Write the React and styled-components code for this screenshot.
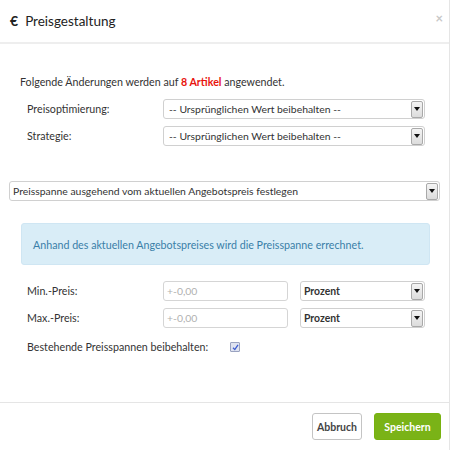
import React from 'react'
import styled, { createGlobalStyle } from 'styled-components'

const GlobalStyle = createGlobalStyle`
  html, body {
    margin: 0;
    padding: 0;
    background: #fff;
  }
  body {
    font-family: Lato, 'Open Sans', sans-serif;
    color: #333;
  }
`

const Modal = styled.div`
  width: 449px;
  height: 450px;
  border-right: 1px solid #e5e5e5;
  background: #fff;
  display: flex;
  flex-direction: column;
`

const Header = styled.div`
  height: 44px;
  box-sizing: border-box;
  border-bottom: 2px solid #eee;
  display: flex;
  align-items: center;
  padding: 0 6px 2px 10px;
`

const Title = styled.h4`
  flex: 1;
  margin: 0;
  font-size: 13.5px;
  font-weight: 400;
  color: #222;
  > b {
    font-size: 14px;
    font-weight: 700;
    margin-right: 7px;
  }
`

const Close = styled.span`
  color: #c8c8c8;
  font-size: 13px;
  font-weight: 700;
  margin-top: -4px;
`

const Body = styled.div`
  flex: 1;
  padding: 30px 9px 0 9px;
  font-size: 10.7px;
`

const Intro = styled.p`
  margin: 0 0 0 11px;
  line-height: 16px;
  > strong {
    color: #e8140e;
  }
`

const Row = styled.div`
  display: grid;
  grid-template-columns: 136px 262px;
  align-items: center;
  padding-left: 18px;
  margin-top: ${p => p.$gap || 7}px;
`

const PriceRow = styled.div`
  display: grid;
  grid-template-columns: 136px 125px 137px;
  align-items: center;
  padding-left: 18px;
  margin-top: ${p => p.$gap || 7}px;
  > :last-child {
    margin-left: 12px;
  }
`

const CheckRow = styled.div`
  display: flex;
  align-items: center;
  gap: 22px;
  padding-left: 18px;
  margin-top: 11px;
  height: 16px;
`

const Label = styled.span`
  line-height: 16px;
`

const SelectBox = styled.div`
  height: 20px;
  box-sizing: border-box;
  border: 1px solid #d0d0d0;
  border-radius: 3px;
  display: flex;
  align-items: center;
  padding-left: ${p => (p.$tight ? 3 : 5)}px;
  font-size: 10.4px;
  font-weight: ${p => (p.$bold ? 700 : 400)};
  color: #333;
  background: #fff;
  margin-top: ${p => p.$gap || 0}px;
  > span {
    flex: 1;
  }
`

const Arrow = styled.i`
  width: 12px;
  height: 17px;
  margin-right: 1px;
  box-sizing: border-box;
  border: 1px solid #a9a9a9;
  border-radius: 2px;
  background: linear-gradient(#f4f4f4, #dcdcdc);
  display: flex;
  align-items: center;
  justify-content: center;
  &::after {
    content: '';
    border-left: 3px solid transparent;
    border-right: 3px solid transparent;
    border-top: 4px solid #111;
  }
`

const Info = styled.div`
  margin: 22px 10px 0 12px;
  height: 42px;
  box-sizing: border-box;
  background: #d9edf7;
  border: 1px solid #cfe6f3;
  border-radius: 3px;
  color: #3a7fa8;
  display: flex;
  align-items: center;
  padding-left: 11px;
`

const Input = styled.input`
  height: 20px;
  box-sizing: border-box;
  border: 1px solid #d5d5d5;
  border-radius: 3px;
  padding: 0 3px;
  font-family: inherit;
  font-size: 10.4px;
  outline: none;
  &::placeholder {
    color: #b0b0b0;
  }
`

const Check = styled.span`
  width: 10px;
  height: 10px;
  box-sizing: border-box;
  border: 1px solid #9aa3c0;
  background: #dfe3f0;
  border-radius: 1px;
  display: flex;
  align-items: center;
  justify-content: center;
`

const Footer = styled.div`
  border-top: 1px solid #e5e5e5;
  height: 47px;
  display: flex;
  justify-content: flex-end;
  align-items: center;
  gap: 12px;
  padding-right: 8px;
`

const Button = styled.button`
  height: 27px;
  box-sizing: border-box;
  border-radius: 3px;
  font-family: inherit;
  font-size: 10.5px;
  font-weight: 700;
  padding: 0;
  border: 1px solid ${p => (p.$primary ? '#78b20f' : '#c4c4c4')};
  background: ${p => (p.$primary ? '#7ab317' : '#fff')};
  color: ${p => (p.$primary ? '#fff' : '#444')};
  width: ${p => (p.$primary ? 67 : 50)}px;
`

const Select = ({ children, ...rest }) => (
  <SelectBox {...rest}>
    <span>{children}</span>
    <Arrow />
  </SelectBox>
)

const App = () => (
  <>
    <GlobalStyle />
    <Modal>
      <Header>
        <Title>
          <b>€</b>Preisgestaltung
        </Title>
        <Close>×</Close>
      </Header>
      <Body>
        <Intro>
          Folgende Änderungen werden auf <strong>8 Artikel</strong> angewendet.
        </Intro>
        <Row $gap={9}>
          <Label>Preisoptimierung:</Label>
          <Select>-- Ursprünglichen Wert beibehalten --</Select>
        </Row>
        <Row>
          <Label>Strategie:</Label>
          <Select>-- Ursprünglichen Wert beibehalten --</Select>
        </Row>
        <Select $tight $gap={35}>
          Preisspanne ausgehend vom aktuellen Angebotspreis festlegen
        </Select>
        <Info>Anhand des aktuellen Angebotspreises wird die Preisspanne errechnet.</Info>
        <PriceRow $gap={16}>
          <Label>Min.-Preis:</Label>
          <Input placeholder="+-0,00" />
          <Select $bold $tight>Prozent</Select>
        </PriceRow>
        <PriceRow>
          <Label>Max.-Preis:</Label>
          <Input placeholder="+-0,00" />
          <Select $bold $tight>Prozent</Select>
        </PriceRow>
        <CheckRow>
          <Label>Bestehende Preisspannen beibehalten:</Label>
          <Check>
            <svg width="7" height="7" viewBox="0 0 7 7">
              <path d="M1 3.8 L2.8 5.6 L6 0.8" fill="none" stroke="#3b5bd0" strokeWidth="1.3" />
            </svg>
          </Check>
        </CheckRow>
      </Body>
      <Footer>
        <Button>Abbruch</Button>
        <Button $primary>Speichern</Button>
      </Footer>
    </Modal>
  </>
)

export default App
